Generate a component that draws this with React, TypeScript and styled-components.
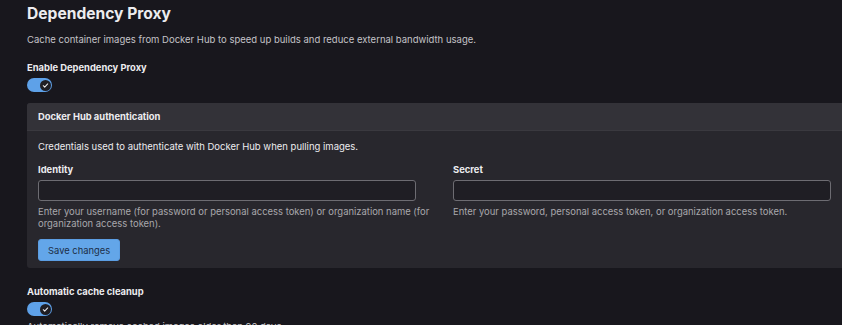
import React, { useState } from 'react';
import styled, { createGlobalStyle } from 'styled-components';

const GlobalStyle = createGlobalStyle`
  html, body {
    margin: 0;
    padding: 0;
    background: #18171d;
    overflow: hidden;
  }
  body {
    font-family: Inter, "Noto Sans", "Liberation Sans", sans-serif;
    color: #ececef;
  }
  * { box-sizing: border-box; }
`;

const Page = styled.main`
  width: 863px;
  padding: 0 0 0 27px;
`;

const Title = styled.h1`
  margin: 0;
  padding-top: 2px;
  font-size: 15.6px;
  line-height: 24px;
  font-weight: 700;
  color: #ececef;
`;

const Description = styled.p<{ $tight?: boolean }>`
  margin: ${({ $tight }) => ($tight ? '0' : '6px 0 0')};
  font-size: 9.5px;
  line-height: 16px;
  color: #c4c3c8;
`;

const SettingBlock = styled.section<{ $afterCard?: boolean }>`
  margin-top: ${({ $afterCard }) => ($afterCard ? '17px' : '13px')};
  display: flex;
  flex-direction: column;
  gap: 3px;
`;

const SettingLabel = styled.span`
  font-size: 9.4px;
  line-height: 14px;
  font-weight: 700;
  color: #ececef;
`;

const ToggleButton = styled.button<{ $on: boolean }>`
  width: 25px;
  height: 14px;
  border: none;
  border-radius: 7px;
  background: ${({ $on }) => ($on ? '#5ea1e8' : '#535158')};
  cursor: pointer;
  display: flex;
  align-items: center;
  justify-content: ${({ $on }) => ($on ? 'flex-end' : 'flex-start')};
  padding: 0 1.5px;
`;

const Knob = styled.span`
  width: 11px;
  height: 11px;
  border-radius: 50%;
  background: #1f1e24;
  display: flex;
  align-items: center;
  justify-content: center;
`;

const Card = styled.div`
  margin-top: 11px;
  background: #28272d;
  border-radius: 3px 0 0 3px;
`;

const CardHeader = styled.div`
  background: #333238;
  border-bottom: 1px solid #3a393f;
  padding: 7px 11px 6px;
  font-size: 9.4px;
  line-height: 14px;
  font-weight: 700;
  color: #ececef;
  border-radius: 3px 0 0 0;
`;

const CardBody = styled.div`
  padding: 9px 11px 7px;
`;

const CardText = styled.p`
  margin: 0 0 9px;
  font-size: 9.5px;
  line-height: 14px;
  color: #ececef;
`;

const FieldGrid = styled.div`
  display: grid;
  grid-template-columns: 1fr 1fr;
  column-gap: 16px;
`;

const Field = styled.div`
  display: flex;
  flex-direction: column;
`;

const FieldLabel = styled.label`
  font-size: 9.4px;
  line-height: 14px;
  font-weight: 700;
  color: #ececef;
  margin-bottom: 3px;
`;

const TextInput = styled.input`
  width: 100%;
  max-width: 378px;
  height: 21px;
  background: #1f1e24;
  border: 1px solid #6d6c72;
  border-radius: 3px;
  color: #ececef;
  font-family: inherit;
  font-size: 9.5px;
  padding: 0 6px;
  outline: none;
`;

const HelpText = styled.small`
  margin-top: 5px;
  font-size: 9.45px;
  line-height: 11.5px;
  color: #a8a7ac;
`;

const SaveButton = styled.button`
  margin-top: 10px;
  height: 22px;
  padding: 0 9px;
  background: #63a6e9;
  color: #1c2e47;
  border: 1px solid #5b9de2;
  border-radius: 3px;
  font-family: inherit;
  font-size: 9.4px;
  cursor: pointer;
`;

const Check = () => (
  <svg width="7" height="7" viewBox="0 0 16 16" fill="none">
    <path d="M3 8.5l3.2 3.2L13 4.5" stroke="#ececef" strokeWidth="2.4" strokeLinecap="round" strokeLinejoin="round" />
  </svg>
);

const Toggle: React.FC<{ on: boolean; onChange: () => void; label: string }> = ({ on, onChange, label }) => (
  <ToggleButton type="button" role="switch" aria-checked={on} aria-label={label} $on={on} onClick={onChange}>
    <Knob>{on && <Check />}</Knob>
  </ToggleButton>
);

export default function App() {
  const [proxyOn, setProxyOn] = useState(true);
  const [cleanupOn, setCleanupOn] = useState(true);
  const [identity, setIdentity] = useState('');
  const [secret, setSecret] = useState('');

  return (
    <Page>
      <GlobalStyle />
      <Title>Dependency Proxy</Title>
      <Description>
        Cache container images from Docker Hub to speed up builds and reduce external bandwidth usage.
      </Description>

      <SettingBlock>
        <SettingLabel>Enable Dependency Proxy</SettingLabel>
        <Toggle on={proxyOn} onChange={() => setProxyOn(v => !v)} label="Enable Dependency Proxy" />
      </SettingBlock>

      <Card>
        <CardHeader>Docker Hub authentication</CardHeader>
        <CardBody>
          <CardText>Credentials used to authenticate with Docker Hub when pulling images.</CardText>
          <FieldGrid>
            <Field>
              <FieldLabel htmlFor="identity">Identity</FieldLabel>
              <TextInput id="identity" value={identity} onChange={e => setIdentity(e.target.value)} />
              <HelpText>
                Enter your username (for password or personal access token) or organization name (for
                organization access token).
              </HelpText>
            </Field>
            <Field>
              <FieldLabel htmlFor="secret">Secret</FieldLabel>
              <TextInput id="secret" type="password" value={secret} onChange={e => setSecret(e.target.value)} />
              <HelpText>Enter your password, personal access token, or organization access token.</HelpText>
            </Field>
          </FieldGrid>
          <SaveButton type="button">Save changes</SaveButton>
        </CardBody>
      </Card>

      <SettingBlock $afterCard>
        <SettingLabel>Automatic cache cleanup</SettingLabel>
        <Toggle on={cleanupOn} onChange={() => setCleanupOn(v => !v)} label="Automatic cache cleanup" />
        <Description $tight>Automatically remove cached images older than 90 days.</Description>
      </SettingBlock>
    </Page>
  );
}
